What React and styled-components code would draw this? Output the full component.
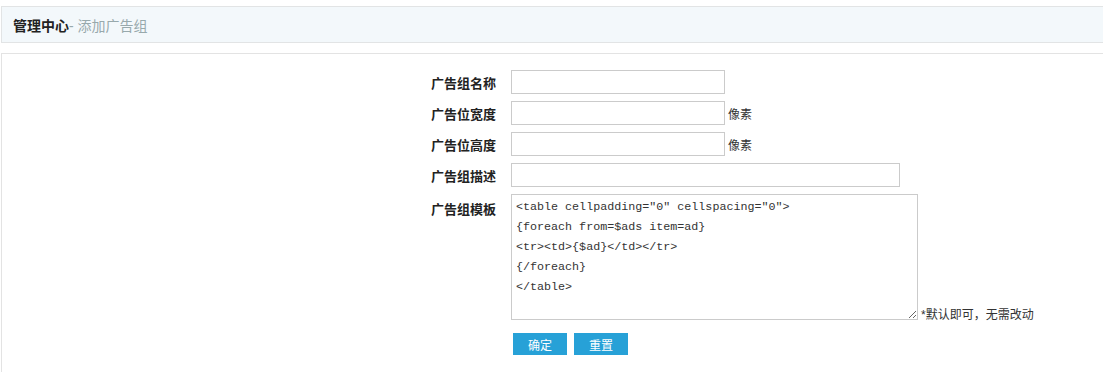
import styled, { createGlobalStyle } from "styled-components";

const GlobalStyle = createGlobalStyle`
  html, body {
    margin: 0;
    padding: 0;
    background: #fff;
    overflow: hidden;
  }
  body {
    font-family: "Liberation Sans", "Noto Sans CJK SC", sans-serif;
    color: #333;
  }
`;

const Page = styled.div`
  padding: 6px 0 0 1px;
`;

const Header = styled.div`
  height: 35px;
  display: flex;
  align-items: center;
  padding-left: 11px;
  background: #f3f8fb;
  border: 1px solid #e2e4e5;
  border-right: 0;
  font-size: 14px;
`;

const Title = styled.b`
  color: #222;
`;

const Sub = styled.span`
  color: #98a9ac;
`;

const Box = styled.div`
  margin-top: 10px;
  min-height: 302px;
  border: 1px solid #e3e3e3;
  border-right: 0;
  border-bottom: 0;
  padding-top: 16px;
`;

const Form = styled.div`
  display: grid;
  grid-template-columns: 494px 1fr;
  column-gap: 15px;
  row-gap: 7px;
`;

const Label = styled.div`
  display: flex;
  justify-content: flex-end;
  align-items: ${(p) => (p.top ? "flex-start" : "center")};
  padding-top: ${(p) => (p.top ? "5px" : "0")};
  font-size: 13px;
  font-weight: bold;
  color: #222;
`;

const Field = styled.div`
  display: flex;
  align-items: ${(p) => (p.bottom ? "flex-end" : "center")};
`;

const Input = styled.input`
  box-sizing: border-box;
  width: ${(p) => p.w}px;
  height: 24px;
  border: 1px solid #cbcbcb;
  padding: 0 4px;
  font-size: 12px;
  outline: none;
`;

const Area = styled.textarea`
  box-sizing: border-box;
  width: 407px;
  height: 126px;
  border: 1px solid #cbcbcb;
  padding: 2px 4px;
  margin: 0;
  font-family: "Liberation Mono", monospace;
  font-size: 11.7px;
  line-height: 20px;
  color: #333;
  outline: none;
  display: block;
`;

const Unit = styled.span`
  margin-left: 3px;
  font-size: 12px;
  color: #333;
`;

const Note = styled.span`
  margin-left: 3px;
  margin-bottom: -2px;
  font-size: 12px;
  color: #333;
`;

const Buttons = styled.div`
  display: flex;
  gap: 7px;
  padding: 6px 0 0 2px;
`;

const Button = styled.button`
  width: 54px;
  height: 22px;
  border: none;
  background: #27a1d7;
  color: #fff;
  font-family: inherit;
  font-size: 12px;
  padding: 0;
  cursor: pointer;
`;

const template = `<table cellpadding="0" cellspacing="0">
{foreach from=$ads item=ad}
<tr><td>{$ad}</td></tr>
{/foreach}
</table>`;

export default function App() {
  return (
    <>
      <GlobalStyle />
      <Page>
        <Header>
          <Title>管理中心</Title>
          <Sub>- 添加广告组</Sub>
        </Header>
        <Box>
          <Form>
            <Label>广告组名称</Label>
            <Field>
              <Input w={214} />
            </Field>
            <Label>广告位宽度</Label>
            <Field>
              <Input w={214} />
              <Unit>像素</Unit>
            </Field>
            <Label>广告位高度</Label>
            <Field>
              <Input w={214} />
              <Unit>像素</Unit>
            </Field>
            <Label>广告组描述</Label>
            <Field>
              <Input w={389} />
            </Field>
            <Label top>广告组模板</Label>
            <Field bottom>
              <Area defaultValue={template} />
              <Note>*默认即可，无需改动</Note>
            </Field>
            <div />
            <Buttons>
              <Button>确定</Button>
              <Button>重置</Button>
            </Buttons>
          </Form>
        </Box>
      </Page>
    </>
  );
}
